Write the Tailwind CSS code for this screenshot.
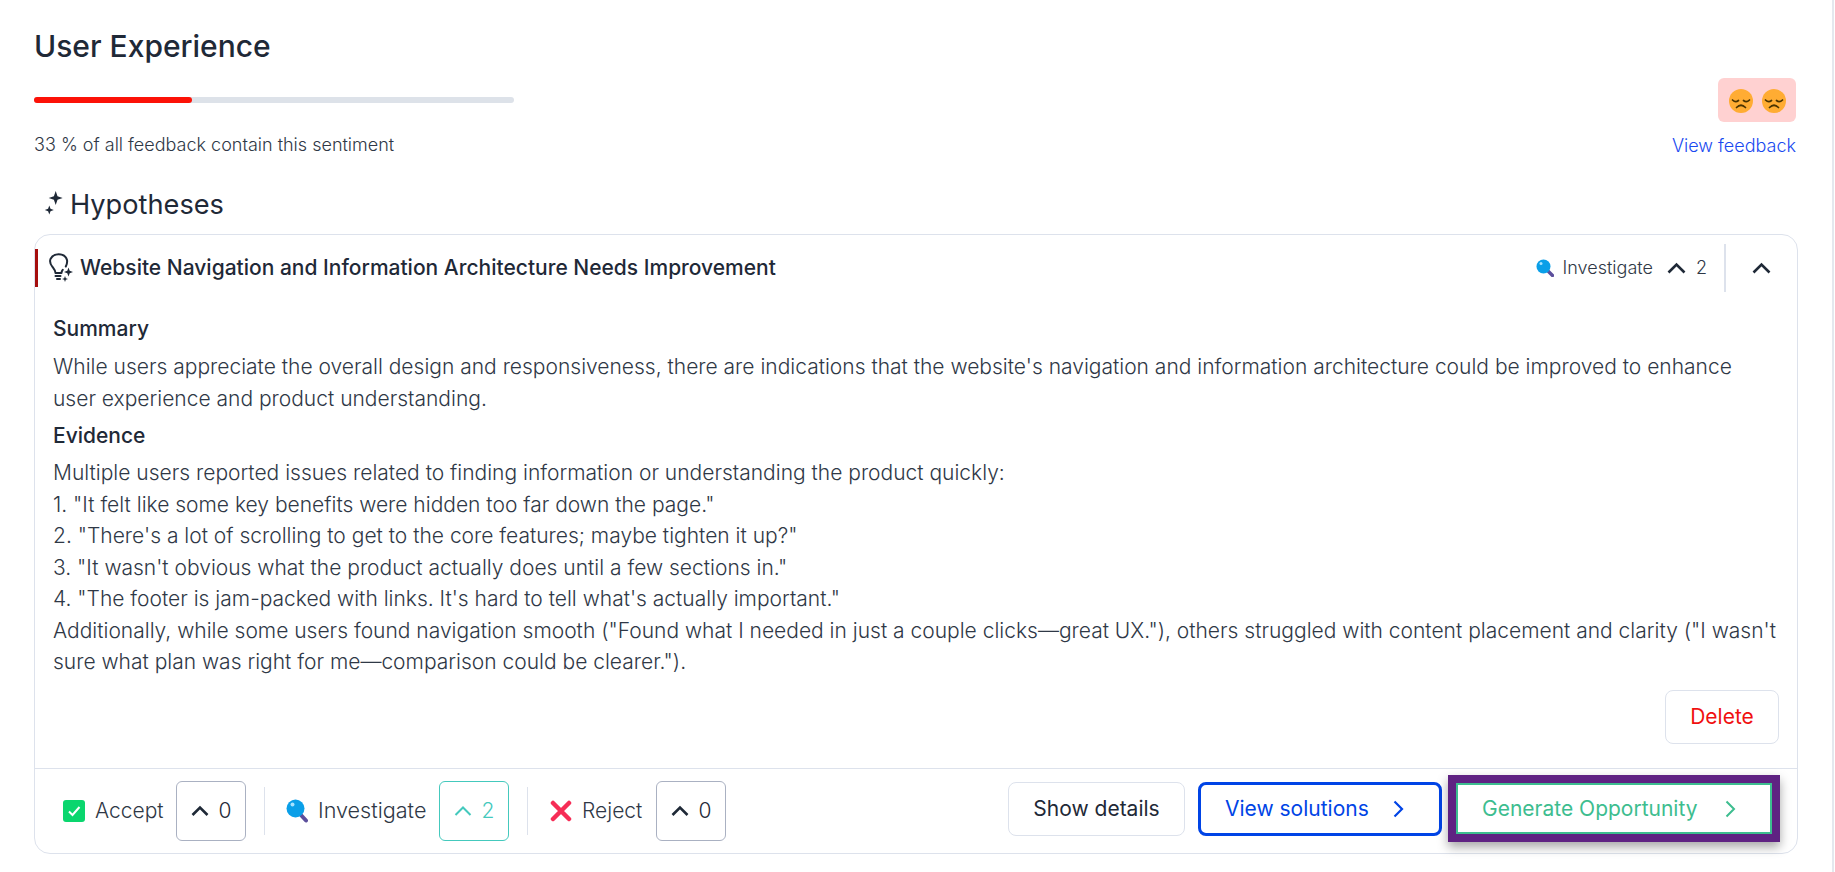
<!DOCTYPE html>
<html><head><meta charset="utf-8"><script src="https://cdn.jsdelivr.net/npm/@tailwindcss/browser@4"></script></head>
<body class="bg-white overflow-hidden font-['Inter',sans-serif] text-[#1f2a37]">
<div class="h-[872px] w-[1834px] border-r-2 border-[#e4e8ee] pl-[34px] pr-[34px] pt-[26px]">
  <h1 class="text-[30px] leading-[40px] font-medium text-[#1f2937]">User Experience</h1>
  <div class="mr-[2px] flex justify-between">
    <div>
      <div class="mt-[31px] h-[6px] w-[480px] rounded-full bg-[#dde2e9]"><div class="h-full w-[158px] rounded-full bg-[#fc1207]"></div></div>
      <p class="mt-[32px] text-[18px] leading-[20px] font-light text-[#2f3846]">33 % of all feedback contain this sentiment</p>
    </div>
    <div class="flex flex-col items-end">
      <div class="mt-[12px] flex h-[44px] w-[78px] items-center justify-center gap-[9px] rounded-[6px] bg-[#ffd1d1] pt-[2px]">
        <svg class="h-[24px] w-[24px]" viewBox="0 0 24 24"><circle cx="12" cy="12" r="12" fill="#ffac33"/><path d="M3.500 11q3 3 6 .5M20.500 11q-3 3-6 .5M7.500 18.500q4.500-4.500 9 0" fill="none" stroke="#4a3300" stroke-width="1.700" stroke-linecap="round"/></svg>
        <svg class="h-[24px] w-[24px]" viewBox="0 0 24 24"><circle cx="12" cy="12" r="12" fill="#ffac33"/><path d="M3.500 11q3 3 6 .5M20.500 11q-3 3-6 .5M7.500 18.500q4.500-4.500 9 0" fill="none" stroke="#4a3300" stroke-width="1.700" stroke-linecap="round"/></svg>
      </div>
      <a class="mt-[14px] text-[18px] leading-[20px] font-light text-[#1a4af0]">View feedback</a>
    </div>
  </div>
  <div class="mt-[31px] flex h-[36px] items-center pl-[10px]">
    <svg class="h-[28px] w-[20px]" viewBox="0 0 20 28" fill="#1f2937"><path d="M11.700 0l1.800 5.200 5.200 1.800-5.200 1.800-1.800 5.200-1.800-5.200L4.700 7l5.200-1.800zM5.300 14.500l1.200 3.300 3.300 1.200-3.300 1.200-1.200 3.300-1.200-3.300L.8 19l3.300-1.200z"/></svg>
    <h2 class="ml-[6px] text-[27.200px] leading-[36px] font-normal text-[#1f2937]">Hypotheses</h2>
  </div>
  <div class="mt-[11px] rounded-[16px] border border-[#dde2ec]">
    <div class="relative flex h-[65px] items-center pl-[13px] pr-[18px]">
      <span class="absolute left-0 top-[14px] h-[38px] w-[3px] bg-[#a50e0e]"></span>
      <svg class="h-[29px] w-[26px] shrink-0" viewBox="0 0 26 29"><path d="M7.500 20c0-2.500-1-3.500-3.300-6.500C2 10.500 1.500 8.500 2.500 6 4 3 7 1.200 10.500 1.200 14.500 1.200 18 3.500 19 7 19.500 9.500 19 11 17.800 13.500M13.500 20c0-1.200.4-2.200 1.200-3.200M7.500 20h6M7.500 23h5M9 26h3" fill="none" stroke="#1f2937" stroke-width="2" stroke-linecap="round"/><path d="M20.500 14.500l1.200 3.300 3.300 1.200-3.300 1.200-1.200 3.300-1.200-3.300-3.300-1.200 3.300-1.200zM17 23l.8 2.200 2.200.8-2.200.8-.8 2.200-.8-2.200-2.200-.8 2.200-.8z" fill="#1f2937"/></svg>
      <h3 class="ml-[6px] text-[21px] leading-[28px] font-medium text-[#1f2937]">Website Navigation and Information Architecture Needs Improvement</h3>
      <div class="ml-auto flex items-center">
        <svg class="h-[18px] w-[18px]" viewBox="0 0 18 18"><path d="M11 11l5.500 5.500" stroke="#5c4f9c" stroke-width="3.400" stroke-linecap="round"/><circle cx="7.500" cy="7.500" r="7" fill="#0a9fe8"/><circle cx="5" cy="4.500" r="1.500" fill="#a6e2ff"/></svg>
        <span class="ml-[9px] text-[18px] font-light text-[#2f3846]">Investigate</span>
        <svg class="ml-[14px] h-[12px] w-[19px]" viewBox="0 0 19 12" fill="none" stroke="#1f2937" stroke-width="2.600"><path d="M1.500 10.500L9.500 2.500l8 8"/></svg>
        <span class="ml-[10px] text-[18px] font-light text-[#2f3846]">2</span>
        <span class="ml-[17px] h-[48px] w-[2px] bg-[#dde2ec]"></span>
        <svg class="ml-[26px] h-[12px] w-[19px]" viewBox="0 0 19 12" fill="none" stroke="#1f2937" stroke-width="2.600"><path d="M1.500 10.500L9.500 2.500l8 8"/></svg>
        <span class="w-[8px]"></span>
      </div>
    </div>
    <div class="mt-[13px] px-[18px] text-[21px] font-light leading-[31.500px] text-[#2f3846]">
      <h4 class="font-medium text-[#1f2937] leading-[32px]">Summary</h4>
      <p class="mt-[6px]">While users appreciate the overall design and responsiveness, there are indications that the website's navigation and information architecture could be improved to enhance user experience and product understanding.</p>
      <h4 class="mt-[6px] font-medium text-[#1f2937] leading-[32px]">Evidence</h4>
      <p class="mt-[5px]">Multiple users reported issues related to finding information or understanding the product quickly:<br>1. "It felt like some key benefits were hidden too far down the page."<br>2. "There's a lot of scrolling to get to the core features; maybe tighten it up?"<br>3. "It wasn't obvious what the product actually does until a few sections in."<br>4. "The footer is jam-packed with links. It's hard to tell what's actually important."<br>Additionally, while some users found navigation smooth ("Found what I needed in just a couple clicks—great UX."), others struggled with content placement and clarity ("I wasn't sure what plan was right for me—comparison could be clearer.").</p>
      <div class="mt-[12px] flex justify-end">
        <button class="h-[54px] w-[114px] rounded-[8px] border border-[#dde2ec] text-[21px] font-normal text-[#f01010]">Delete</button>
      </div>
    </div>
    <div class="mt-[24px] flex h-[85px] items-center border-t border-[#dde2ec] pl-[28px] pr-[25px] text-[21px] font-light text-[#2f3846]">
      <svg class="h-[22px] w-[22px]" viewBox="0 0 22 22"><rect width="22" height="22" rx="3" fill="#0ad66e"/><path d="M6 11.500l3.500 3.500 7-8" fill="none" stroke="#fff" stroke-width="2"/></svg>
      <span class="ml-[10px] w-[70px]">Accept</span>
      <button class="ml-[11px] flex h-[60px] w-[70px] items-center justify-center gap-[10px] rounded-[6px] border border-[#aab1c2] text-[#1f2937]"><svg class="h-[12px] w-[18px]" viewBox="0 0 18 12" fill="none" stroke="#1f2937" stroke-width="2.600"><path d="M1.500 10L9 2.500 16.500 10"/></svg>0</button>
      <span class="ml-[18px] h-[48px] w-px bg-[#dde2ec]"></span>
      <svg class="ml-[21px] h-[24px] w-[22px]" viewBox="0 0 22 24"><path d="M14 15l6 6.500" stroke="#5c4f9c" stroke-width="4" stroke-linecap="round"/><circle cx="9.500" cy="9.500" r="9" fill="#0a9fe8"/><circle cx="6.500" cy="5.500" r="2" fill="#a6e2ff"/></svg>
      <span class="ml-[10px] w-[109px] text-[21.600px]">Investigate</span>
      <button class="ml-[12px] flex h-[60px] w-[70px] items-center justify-center gap-[10px] rounded-[6px] border border-[#44c9bd] text-[#44c9bd]"><svg class="h-[12px] w-[18px]" viewBox="0 0 18 12" fill="none" stroke="#44c9bd" stroke-width="2"><path d="M1.500 10L9 2.500 16.500 10"/></svg>2</button>
      <span class="ml-[18px] h-[48px] w-px bg-[#dde2ec]"></span>
      <svg class="ml-[22px] h-[22px] w-[22px]" viewBox="0 0 22 22" stroke="#f62d56" stroke-width="4.500" stroke-linecap="round"><path d="M3 3l16 16M19 3L3 19"/></svg>
      <span class="ml-[10px] w-[60px]">Reject</span>
      <button class="ml-[14px] flex h-[60px] w-[70px] items-center justify-center gap-[10px] rounded-[6px] border border-[#aab1c2] text-[#1f2937]"><svg class="h-[12px] w-[18px]" viewBox="0 0 18 12" fill="none" stroke="#1f2937" stroke-width="2.600"><path d="M1.500 10L9 2.500 16.500 10"/></svg>0</button>
      <button class="mb-[4px] ml-auto h-[54px] w-[177px] rounded-[8px] border border-[#dde2ec] font-normal text-[#1f2937]">Show details</button>
      <button class="mb-[4px] ml-[13px] flex h-[54px] w-[244px] items-center justify-between rounded-[8px] border-[3px] border-[#0044e6] pl-[24px] pr-[35px] font-normal text-[#0044e6]">View solutions<svg class="h-[18px] w-[11px]" viewBox="0 0 11 18" fill="none" stroke="#0044e6" stroke-width="2.200"><path d="M1.500 1.500L9 9l-7.500 7.500"/></svg></button>
      <button class="mb-[4px] ml-[14px] flex h-[51px] w-[316px] items-center justify-between border-2 border-[#3dbd8f] pl-[24px] pr-[34px] font-normal text-[#3dbd8f] shadow-[0_0_0_8px_#5f2282,0_5px_10px_8px_rgba(0,0,0,0.35)]">Generate Opportunity<svg class="h-[18px] w-[11px]" viewBox="0 0 11 18" fill="none" stroke="#3dbd8f" stroke-width="2"><path d="M1.500 1.500L9 9l-7.500 7.500"/></svg></button>
    </div>
  </div>
</div>
</body></html>
